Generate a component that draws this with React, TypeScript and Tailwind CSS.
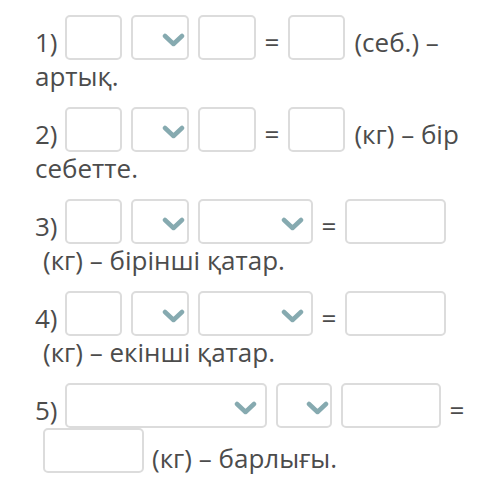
const Chevron = () => (
  <svg width="23" height="14" viewBox="0 0 23 14" className="mt-[4px]">
    <path
      d="M3 3 L11.5 11 L20 3"
      fill="none"
      stroke="#86aab0"
      strokeWidth="4.5"
      strokeLinecap="round"
      strokeLinejoin="round"
    />
  </svg>
);

const Box = ({ size }: { size: string }) => (
  <div className={`h-[45px] ${size} shrink-0 rounded-[5px] border-2 border-[#dcdcdc] bg-white`} />
);

const Select = ({ size }: { size: string }) => (
  <div
    className={`h-[45px] ${size} shrink-0 rounded-[5px] border-2 border-[#dcdcdc] bg-white flex items-center justify-end`}
  >
    <Chevron />
  </div>
);

const T = ({ children }: { children: React.ReactNode }) => (
  <span className="leading-[30px] mb-[3px] whitespace-nowrap">{children}</span>
);

const Num = ({ children }: { children: React.ReactNode }) => (
  <span className="leading-[30px] mb-[3px] mr-[-2px] whitespace-nowrap">{children}</span>
);

const Line = ({ children }: { children: React.ReactNode }) => (
  <div className="flex items-end gap-[9px] h-[45px]">{children}</div>
);

const Tail = ({ children, indent }: { children: React.ReactNode; indent?: boolean }) => (
  <div className={`leading-[32px] ${indent ? 'pl-2' : ''}`}>{children}</div>
);

export default function App() {
  return (
    <div
      className="w-[481px] h-[484px] bg-white text-[#4c4c4c] text-[26px] pt-[15px] pl-[35px] flex flex-col gap-[15px]"
      style={{ fontFamily: '"Open Sans", "Noto Sans", sans-serif' }}
    >
      <div>
        <Line>
          <Num>1)</Num>
          <Box size="w-[57px]" />
          <Select size="w-[58px] pr-[2px]" />
          <Box size="w-[58px]" />
          <T>=</T>
          <Box size="w-[57px]" />
          <T>(себ.) –</T>
        </Line>
        <Tail>артық.</Tail>
      </div>

      <div>
        <Line>
          <Num>2)</Num>
          <Box size="w-[57px]" />
          <Select size="w-[58px] pr-[2px]" />
          <Box size="w-[58px]" />
          <T>=</T>
          <Box size="w-[57px]" />
          <T>(кг) – бір</T>
        </Line>
        <Tail>себетте.</Tail>
      </div>

      <div>
        <Line>
          <Num>3)</Num>
          <Box size="w-[57px]" />
          <Select size="w-[58px] pr-[2px]" />
          <Select size="w-[115px] pr-[7px]" />
          <T>=</T>
          <Box size="w-[101px]" />
        </Line>
        <Tail indent>(кг) – бірінші қатар.</Tail>
      </div>

      <div>
        <Line>
          <Num>4)</Num>
          <Box size="w-[57px]" />
          <Select size="w-[58px] pr-[2px]" />
          <Select size="w-[115px] pr-[7px]" />
          <T>=</T>
          <Box size="w-[101px]" />
        </Line>
        <Tail indent>(кг) – екінші қатар.</Tail>
      </div>

      <div>
        <Line>
          <Num>5)</Num>
          <Select size="w-[202px] pr-[8px]" />
          <Select size="w-[56px] pr-[1px]" />
          <Box size="w-[100px]" />
          <T>=</T>
        </Line>
        <div className="flex items-end gap-[8px] h-[45px] pl-2">
          <Box size="w-[101px]" />
          <span className="leading-[30px] whitespace-nowrap">(кг) – барлығы.</span>
        </div>
      </div>
    </div>
  );
}
